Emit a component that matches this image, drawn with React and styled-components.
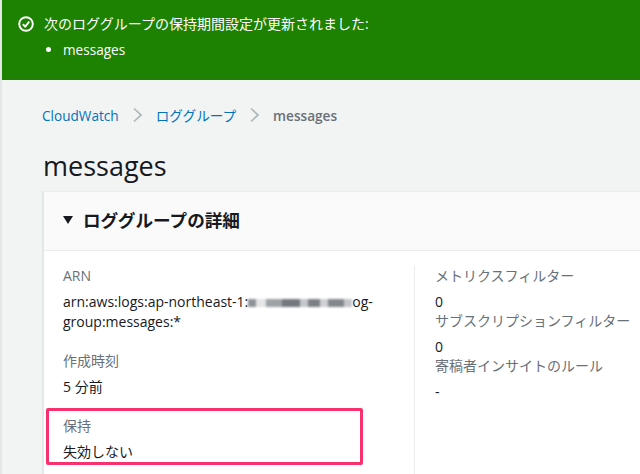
import React from 'react';
import styled, { createGlobalStyle } from 'styled-components';

const GlobalStyle = createGlobalStyle`
  html, body {
    margin: 0;
    padding: 0;
    background: #fff;
    overflow: hidden;
  }
  * { box-sizing: border-box; }
`;

const Page = styled.div`
  position: relative;
  width: 640px;
  height: 474px;
  overflow: hidden;
  background: #f2f3f3;
  border-left: 2px solid #e4e7e7;
  font-family: "Open Sans", "Noto Sans CJK JP", sans-serif;
  color: #16191f;
`;

const Flash = styled.div`
  height: 80px;
  background: #1d8102;
  color: #fff;
  display: flex;
  gap: 10px;
  padding: 14px 0 0 16px;
  font-size: 14px;
`;

const FlashBody = styled.div`
  line-height: 20px;
`;

const FlashList = styled.ul`
  margin: 6px 0 0;
  padding: 0 0 0 19px;
  line-height: 20px;
  font-size: 13.6px;
`;

const Crumbs = styled.nav`
  display: flex;
  align-items: center;
  height: 22px;
  margin: 24px 0 0 40px;
  font-size: 13.6px;
`;

const Crumb = styled.a`
  color: ${(p) => (p.$current ? '#687078' : '#0073bb')};
  font-weight: ${(p) => (p.$current ? 600 : 400)};
`;

const Heading = styled.h1`
  margin: 22px 0 0 41px;
  font-size: 27px;
  font-weight: 400;
  line-height: 36px;
`;

const Card = styled.section`
  margin: 7px 0 0 40px;
  background: #fff;
  border-left: 2px solid #e4e7e7;
  border-top: 1px solid #eaeded;
  height: 300px;
`;

const CardHeader = styled.header`
  height: 59px;
  background: #fafafa;
  border-bottom: 1px solid #eaeded;
  display: flex;
  align-items: center;
  gap: 10px;
  padding: 0 0 3px 19px;
  font-size: 17.6px;
  font-weight: 700;
`;

const Columns = styled.div`
  display: grid;
  grid-template-columns: 370px 1fr;
  padding-top: 15px;
`;

const Column = styled.div`
  padding-left: ${(p) => (p.$second ? '20px' : '19px')};
  border-left: ${(p) => (p.$second ? '1px solid #eaeded' : 'none')};
  height: 220px;
`;

const Field = styled.div`
  margin-bottom: ${(p) => p.$gap || 0}px;
`;

const Label = styled.div`
  color: #687078;
  font-size: 14px;
  line-height: 20px;
  white-space: nowrap;
`;

const Value = styled.div`
  font-size: 14px;
  line-height: 20px;
  margin-top: 6px;
  white-space: nowrap;
`;

const Masked = styled.span`
  display: inline-block;
  width: 104px;
  height: 8px;
  vertical-align: 0;
  background: linear-gradient(
    90deg,
    #8f9296 0 8px,
    #e4e5e6 8px 18px,
    #9ea1a5 18px 34px,
    #74787e 34px 52px,
    #c4c6c9 52px 60px,
    #7d8187 60px 72px,
    #cfd1d3 72px 80px,
    #84888d 80px 96px,
    #c4c6c9 96px 104px
  );
  filter: blur(1.2px);
`;

const Highlight = styled.div`
  position: absolute;
  left: 44px;
  top: 408px;
  width: 317px;
  height: 57px;
  border: 3px solid #f9306e;
  border-radius: 2px;
`;

const FlashIcon = styled.svg`
  margin-top: 2px;
  flex-shrink: 0;
`;

const ChevronIcon = styled.svg`
  margin: 0 14px;
`;

function CheckIcon() {
  return (
    <FlashIcon width="16" height="16" viewBox="0 0 16 16" fill="none" stroke="#fff" strokeWidth="1.9">
      <circle cx="8" cy="8" r="6.8" />
      <path d="M4.8 8.2 7.2 10.5 11.3 5.6" />
    </FlashIcon>
  );
}

function Chevron() {
  return (
    <ChevronIcon width="9" height="16" viewBox="0 0 9 16" fill="none" stroke="#aab7b8" strokeWidth="1.7">
      <path d="M1 1.5 8 8 1 14.5" />
    </ChevronIcon>
  );
}

function Caret() {
  return (
    <svg width="10" height="8" viewBox="0 0 10 8" fill="#16191f">
      <path d="M0 0h10L5 8z" />
    </svg>
  );
}

export default function App() {
  return (
    <>
      <GlobalStyle />
      <Page>
        <Flash>
          <CheckIcon />
          <FlashBody>
            次のロググループの保持期間設定が更新されました:
            <FlashList>
              <li>messages</li>
            </FlashList>
          </FlashBody>
        </Flash>
        <Crumbs>
          <Crumb>CloudWatch</Crumb>
          <Chevron />
          <Crumb>ロググループ</Crumb>
          <Chevron />
          <Crumb $current>messages</Crumb>
        </Crumbs>
        <Heading>messages</Heading>
        <Card>
          <CardHeader>
            <Caret />
            ロググループの詳細
          </CardHeader>
          <Columns>
            <Column>
              <Field $gap={19}>
                <Label>ARN</Label>
                <Value>
                  arn:aws:logs:ap-northeast-1:<Masked />og-<br />group:messages:*
                </Value>
              </Field>
              <Field $gap={19}>
                <Label>作成時刻</Label>
                <Value>5 分前</Value>
              </Field>
              <Field>
                <Label>保持</Label>
                <Value>失効しない</Value>
              </Field>
            </Column>
            <Column $second>
              <Field $gap={-1}>
                <Label>メトリクスフィルター</Label>
                <Value>0</Value>
              </Field>
              <Field $gap={-1}>
                <Label>サブスクリプションフィルター</Label>
                <Value>0</Value>
              </Field>
              <Field>
                <Label>寄稿者インサイトのルール</Label>
                <Value>-</Value>
              </Field>
            </Column>
          </Columns>
        </Card>
        <Highlight />
      </Page>
    </>
  );
}
